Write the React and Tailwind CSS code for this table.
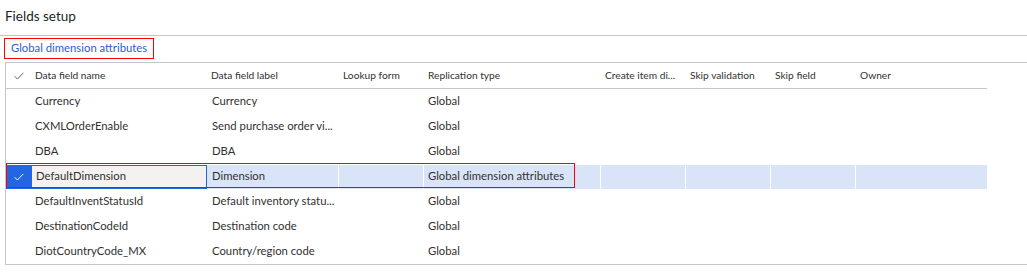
import React from 'react';

const columns = [
    { key: 'check', label: '', width: 'w-[25px]' },
    { key: 'name', label: 'Data field name', width: 'w-[176px]' },
    { key: 'label', label: 'Data field label', width: 'w-[132px]' },
    { key: 'lookup', label: 'Lookup form', width: 'w-[85px]' },
    { key: 'replication', label: 'Replication type', width: 'w-[177px]' },
    { key: 'create', label: 'Create item di...', width: 'w-[85px]' },
    { key: 'skipValidation', label: 'Skip validation', width: 'w-[85px]' },
    { key: 'skipField', label: 'Skip field', width: 'w-[85px]' },
    { key: 'owner', label: 'Owner', width: 'w-[131px]' },
];

const rows = [
    { name: 'Currency', label: 'Currency', replication: 'Global' },
    { name: 'CXMLOrderEnable', label: 'Send purchase order vi...', replication: 'Global' },
    { name: 'DBA', label: 'DBA', replication: 'Global' },
    { name: 'DefaultDimension', label: 'Dimension', replication: 'Global dimension attributes', selected: true },
    { name: 'DefaultInventStatusId', label: 'Default inventory statu...', replication: 'Global' },
    { name: 'DestinationCodeId', label: 'Destination code', replication: 'Global' },
    { name: 'DiotCountryCode_MX', label: 'Country/region code', replication: 'Global' },
];

const CheckMark = ({ className }) => (
    <svg width="10" height="8" viewBox="0 0 10 8" className={className} fill="none">
        <path d="M0.6 4.2 L3.4 7 L9.4 0.8" stroke="currentColor" strokeWidth="1" />
    </svg>
);

const GridRow = ({ row }) => {
    if (row.selected) {
        return (
            <div className="relative flex h-[25px] w-[981px] items-center">
                <div className="flex h-[24px] w-[25px] items-center justify-center bg-[#2266e3] text-white">
                    <CheckMark />
                </div>
                <div className="flex h-[24px] w-[176px] items-center border border-[#2266e3] bg-[#f3f2f1] pl-[4px]">
                    {row.name}
                </div>
                <div className="flex h-[24px] w-[132px] items-center border-r border-white bg-[#dae4f8] pl-[5px]">
                    {row.label}
                </div>
                <div className="h-[24px] w-[85px] border-r border-white bg-[#dae4f8]" />
                <div className="flex h-[24px] w-[177px] items-center border-r border-white bg-[#dae4f8] pl-[4px]">
                    {row.replication}
                </div>
                <div className="h-[24px] w-[85px] border-r border-white bg-[#dae4f8]" />
                <div className="h-[24px] w-[85px] border-r border-white bg-[#dae4f8]" />
                <div className="h-[24px] w-[85px] border-r border-white bg-[#dae4f8]" />
                <div className="h-[24px] w-[131px] bg-[#dae4f8]" />
                {/* annotation box */}
                <div className="pointer-events-none absolute left-0 top-[-1px] h-[25px] w-[569px] border border-[#ff0000]" />
            </div>
        );
    }

    return (
        <div className="flex h-[25px] w-[981px] items-center">
            <div className="w-[25px]" />
            <div className="w-[176px] pl-[4px]">{row.name}</div>
            <div className="w-[132px] pl-[5px]">{row.label}</div>
            <div className="w-[85px]" />
            <div className="w-[177px] pl-[4px]">{row.replication}</div>
        </div>
    );
};

const App = () => {
    return (
        <div className="h-[273px] w-[1027px] overflow-hidden bg-white text-[#323130] font-['Lato',sans-serif]">
            <div className="h-[36px] border-b border-[#c6c6c6] pl-[5px] pt-[6px] text-[13.5px] leading-[20px] text-[#201f1e]">
                Fields setup
            </div>

            <div className="h-[26px] pl-[4px] pt-[2px]">
                <div className="flex h-[21px] w-[150px] items-center border border-[#ff0000] pl-[6px] text-[11.3px] text-[#2f5bd8] whitespace-nowrap">
                    Global dimension attributes
                </div>
            </div>

            <div className="ml-[5px] border-y border-l border-[#c6c6c6] text-[11.3px] whitespace-nowrap">
                <div className="flex h-[26px] w-[981px] items-center border-b border-[#c6c6c6] text-[10.2px] text-[#323130]">
                    {columns.map((col) => (
                        <div key={col.key} className={`${col.width} ${col.key === 'check' ? 'flex justify-center' : 'pl-[4px]'}`}>
                            {col.key === 'check' ? <CheckMark className="text-[#605e5c]" /> : col.label}
                        </div>
                    ))}
                </div>
                {rows.map((row) => (
                    <GridRow key={row.name} row={row} />
                ))}
            </div>
        </div>
    );
};

export default App;
